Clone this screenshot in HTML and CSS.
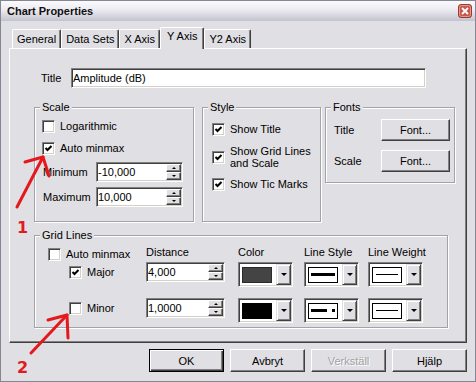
FILE: index.html
```html
<!DOCTYPE html>
<html lang="sv">
<head>
    <meta charset="UTF-8">
    <title>Chart Properties</title>
    <link rel="stylesheet" href="styles.css">
</head>
<body>
    <div class="window">
        <div class="titlebar">
            <span class="caption">Chart Properties</span>
            <span class="close">
                <svg width="14" height="14" viewBox="0 0 14 14">
                    <rect x="0.5" y="0.5" width="13" height="13" rx="2.5" fill="#c9584c" stroke="#9a3b33"/>
                    <rect x="1.5" y="1.5" width="11" height="11" rx="2" fill="none" stroke="#e79a8f"/>
                    <path d="M4 4 L10 10 M10 4 L4 10" stroke="#fff" stroke-width="1.8"/>
                </svg>
            </span>
        </div>

        <div class="client">
            <div class="tabs">
                <div class="tab">General</div>
                <div class="tab">Data Sets</div>
                <div class="tab">X Axis</div>
                <div class="tab active">Y Axis</div>
                <div class="tab">Y2 Axis</div>
            </div>

            <div class="panel">
                <div class="title-row">
                    <span class="title-label">Title</span>
                    <div class="textbox title-input">Amplitude (dB)</div>
                </div>

                <div class="groups">
                    <div class="group scale">
                        <span class="group-title">Scale</span>
                        <div class="scale-body">
                            <div class="check-row"><span class="check"></span>Logarithmic</div>
                            <div class="check-row second"><span class="check"><svg width="9" height="9" viewBox="0 0 9 9"><path d="M1.5 4 L3.5 6 L7.5 2" fill="none" stroke="#000" stroke-width="2"/></svg></span>Auto minmax</div>
                            <div class="field-row">
                                <span class="field-label">Minimum</span>
                                <div class="textbox spin scale-input">-10,000<span class="spinner"><span class="spin-btn up"></span><span class="spin-btn down"></span></span></div>
                            </div>
                            <div class="field-row">
                                <span class="field-label">Maximum</span>
                                <div class="textbox spin scale-input">10,000<span class="spinner"><span class="spin-btn up"></span><span class="spin-btn down"></span></span></div>
                            </div>
                        </div>
                    </div>

                    <div class="group style">
                        <span class="group-title">Style</span>
                        <div class="style-body">
                            <div class="check-row"><span class="check"><svg width="9" height="9" viewBox="0 0 9 9"><path d="M1.5 4 L3.5 6 L7.5 2" fill="none" stroke="#000" stroke-width="2"/></svg></span>Show Title</div>
                            <div class="check-row two-line"><span class="check"><svg width="9" height="9" viewBox="0 0 9 9"><path d="M1.5 4 L3.5 6 L7.5 2" fill="none" stroke="#000" stroke-width="2"/></svg></span><span>Show Grid Lines<br>and Scale</span></div>
                            <div class="check-row"><span class="check"><svg width="9" height="9" viewBox="0 0 9 9"><path d="M1.5 4 L3.5 6 L7.5 2" fill="none" stroke="#000" stroke-width="2"/></svg></span>Show Tic Marks</div>
                        </div>
                    </div>

                    <div class="group fonts">
                        <span class="group-title">Fonts</span>
                        <div class="fonts-body">
                            <div class="font-row"><span class="font-label">Title</span><button class="btn font-btn">Font...</button></div>
                            <div class="font-row"><span class="font-label">Scale</span><button class="btn font-btn">Font...</button></div>
                        </div>
                    </div>
                </div>

                <div class="group gridlines">
                    <span class="group-title">Grid Lines</span>
                    <div class="grid-body">
                        <div class="grid-row head">
                            <div class="check-row"><span class="check"></span>Auto minmax</div>
                            <span class="col-label">Distance</span>
                            <span class="col-label">Color</span>
                            <span class="col-label">Line Style</span>
                            <span class="col-label">Line Weight</span>
                        </div>
                        <div class="grid-row">
                            <div class="check-row sub"><span class="check"><svg width="9" height="9" viewBox="0 0 9 9"><path d="M1.5 4 L3.5 6 L7.5 2" fill="none" stroke="#000" stroke-width="2"/></svg></span>Major</div>
                            <div class="textbox spin dist-input">4,000<span class="spinner"><span class="spin-btn up"></span><span class="spin-btn down"></span></span></div>
                            <div class="combo"><span class="swatch color-dark"></span><span class="combo-btn"></span></div>
                            <div class="combo"><span class="swatch line-box"><span class="line thick"></span></span><span class="combo-btn"></span></div>
                            <div class="combo"><span class="swatch line-box"><span class="line thin"></span></span><span class="combo-btn"></span></div>
                        </div>
                        <div class="grid-row minor">
                            <div class="check-row sub"><span class="check"></span>Minor</div>
                            <div class="textbox spin dist-input">1,0000<span class="spinner"><span class="spin-btn up"></span><span class="spin-btn down"></span></span></div>
                            <div class="combo"><span class="swatch color-black"></span><span class="combo-btn"></span></div>
                            <div class="combo"><span class="swatch line-box"><span class="dash"></span><span class="dot"></span></span><span class="combo-btn"></span></div>
                            <div class="combo"><span class="swatch line-box"><span class="line thin"></span></span><span class="combo-btn"></span></div>
                        </div>
                    </div>
                </div>
            </div>

            <div class="buttons">
                <button class="btn dlg-btn default">OK</button>
                <button class="btn dlg-btn">Avbryt</button>
                <button class="btn dlg-btn disabled">Verkställ</button>
                <button class="btn dlg-btn">Hjälp</button>
            </div>
        </div>
    </div>

    <svg class="annotations" width="476" height="382" viewBox="0 0 476 382">
        <g stroke="#e3191d" stroke-width="3" stroke-linecap="round" stroke-linejoin="round" fill="none">
            <path d="M17 207 L43 157"/>
            <path d="M25 162 L43 157 L49 176"/>
            <path d="M31 353 L67 315"/>
            <path d="M48 320 L67 315 L68 338"/>
        </g>
        <text x="17" y="233" class="mark">1</text>
        <text x="17" y="373" class="mark">2</text>
    </svg>
</body>
</html>
```

FILE: styles.css
```css
body {
    margin: 0;
    position: relative;
    font-family: "Liberation Sans", Arial, sans-serif;
    font-size: 11px;
    color: #000;
    background: #e0dfe3;
}

.window {
    width: 476px;
    height: 382px;
    box-sizing: border-box;
    border: 1px solid #858594;
    background: #e0dfe3;
}

.titlebar {
    height: 20px;
    display: flex;
    align-items: center;
    justify-content: space-between;
    padding: 0 3px 0 6px;
    background: linear-gradient(#fbfbfd, #ebebf1 45%, #c3c3cf);
}

.caption {
    font-weight: bold;
    color: #111;
}

.close svg {
    display: block;
}

.client {
    padding: 0 8px;
}

/* tabs */
.tabs {
    display: flex;
    align-items: flex-end;
    height: 21px;
    margin-top: 6px;
    padding-left: 3px;
}

.tab {
    height: 19px;
    box-sizing: border-box;
    padding: 3px 4px 0;
    line-height: 13px;
    border-top: 1px solid #fff;
    border-left: 1px solid #fff;
    border-right: 1px solid #404040;
    box-shadow: inset -1px 0 0 #808080;
    border-radius: 2px 2px 0 0;
}

.tab.active {
    height: 22px;
    padding: 2px 6px 0;
    margin-bottom: -1px;
    position: relative;
    z-index: 1;
    background: #e0dfe3;
}

.panel {
    border: 1px solid;
    border-color: #fff #404040 #404040 #fff;
    box-shadow: inset -1px -1px 0 #808080;
    padding: 19px 0 14px 24px;
}

/* inputs */
.textbox {
    height: 20px;
    box-sizing: border-box;
    display: flex;
    align-items: center;
    padding: 1px 1px 1px 1px;
    background: #fff;
    border: 1px solid;
    border-color: #808080 #fff #fff #808080;
    box-shadow: inset 1px 1px 0 #404040, inset -1px -1px 0 #d4d0c8;
    line-height: 13px;
}

.title-row {
    display: flex;
    align-items: center;
    margin-left: 7px;
}

.title-label {
    width: 30px;
}

.title-input {
    width: 355px;
}

.spinner {
    margin-left: auto;
    align-self: stretch;
    width: 15px;
    display: flex;
    flex-direction: column;
}

.spin-btn {
    flex: 1;
    box-sizing: border-box;
    display: flex;
    align-items: center;
    justify-content: center;
    background: #e0dfe3;
    border: 1px solid;
    border-color: #fff #404040 #404040 #fff;
    box-shadow: inset -1px -1px 0 #808080;
}

.spin-btn.up::after {
    content: "";
    border-left: 2px solid transparent;
    border-right: 2px solid transparent;
    border-bottom: 2px solid #000;
}

.spin-btn.down::after {
    content: "";
    border-left: 2px solid transparent;
    border-right: 2px solid transparent;
    border-top: 2px solid #000;
}

/* group boxes */
.groups {
    display: flex;
    align-items: flex-start;
    margin-top: 19px;
}

.group {
    box-sizing: border-box;
    border: 1px solid #a3a2a7;
    box-shadow: 1px 1px 0 #fff, inset 1px 1px 0 #fff;
}

.group-title {
    display: block;
    width: fit-content;
    margin: -8px 0 0 5px;
    padding: 0 2px;
    line-height: 14px;
    background: #e0dfe3;
}

.scale {
    width: 160px;
    height: 115px;
    margin-right: 8px;
}

.style {
    width: 119px;
    height: 115px;
    margin-right: 4px;
}

.fonts {
    width: 130px;
    height: 76px;
}

.check-row {
    display: flex;
    align-items: center;
    gap: 5px;
    height: 15px;
    line-height: 13px;
    white-space: nowrap;
}

.check {
    width: 13px;
    height: 13px;
    flex: none;
    box-sizing: border-box;
    display: flex;
    align-items: center;
    justify-content: center;
    background: #fff;
    border: 1px solid;
    border-color: #808080 #fff #fff #808080;
    box-shadow: inset 1px 1px 0 #404040, inset -1px -1px 0 #d4d0c8;
}

.check svg {
    display: block;
}

.scale-body {
    display: flex;
    flex-direction: column;
    gap: 6px;
    padding: 5px 0 0 7px;
}

.scale-body .second {
    margin-top: 1px;
}

.field-row {
    display: flex;
    align-items: center;
}

.field-row + .field-row {
    margin-top: -1px;
}

.field-label {
    width: 53px;
    margin-left: 1px;
}

.scale-input {
    width: 87px;
}

.style-body {
    display: flex;
    flex-direction: column;
    gap: 9px;
    padding: 9px 0 0 9px;
}

.style-body .check-row {
    height: 13px;
}

.style-body .two-line {
    height: 24px;
    line-height: 12px;
}

.fonts-body {
    display: flex;
    flex-direction: column;
    gap: 9px;
    padding: 5px 0 0 8px;
}

.font-row {
    display: flex;
    align-items: center;
}

.font-label {
    width: 47px;
}

/* buttons */
.btn {
    box-sizing: border-box;
    display: flex;
    align-items: center;
    justify-content: center;
    padding: 0;
    font: inherit;
    color: #000;
    background: #e0dfe3;
    border: 1px solid;
    border-color: #fff #404040 #404040 #fff;
    box-shadow: inset -1px -1px 0 #808080;
}

.font-btn {
    width: 69px;
    height: 22px;
}

/* grid lines */
.gridlines {
    width: 414px;
    height: 93px;
    margin-top: 13px;
}

.grid-body {
    padding: 4px 0 0 13px;
}

.grid-row {
    display: grid;
    grid-template-columns: 98px 92px 66px 64px 55px;
    align-items: start;
}

.grid-row.head {
    height: 16px;
    align-items: center;
}

.grid-row.head .col-label {
    align-self: start;
    line-height: 13px;
    white-space: nowrap;
}

.grid-row.minor {
    margin-top: 11px;
}

.check-row.sub {
    height: 20px;
    margin-left: 21px;
}

.dist-input {
    width: 79px;
}

.combo {
    width: 55px;
    height: 25px;
    box-sizing: border-box;
    display: flex;
    align-items: center;
    padding: 1px 1px 1px 3px;
    background: #fff;
    border: 1px solid;
    border-color: #808080 #fff #fff #808080;
    box-shadow: inset 1px 1px 0 #404040, inset -1px -1px 0 #d4d0c8;
}

.swatch {
    width: 30px;
    height: 16px;
    box-sizing: border-box;
    flex: none;
}

.color-dark {
    background: #444;
    border: 1px solid #2a2a2a;
}

.color-black {
    background: #000;
}

.line-box {
    border: 1px solid #000;
    background: #fff;
    display: flex;
    align-items: center;
    padding: 0 2px;
}

.line {
    flex: 1;
    background: #000;
}

.line.thick {
    height: 3px;
}

.line.thin {
    height: 1px;
    margin: 0 1px;
}

.dash {
    width: 17px;
    height: 3px;
    background: #000;
}

.dot {
    width: 3px;
    height: 3px;
    margin-left: 5px;
    background: #000;
}

.combo-btn {
    margin-left: auto;
    align-self: stretch;
    width: 15px;
    box-sizing: border-box;
    display: flex;
    align-items: center;
    justify-content: center;
    background: #e0dfe3;
    border: 1px solid;
    border-color: #e0dfe3 #404040 #404040 #e0dfe3;
    box-shadow: inset 1px 1px 0 #fff, inset -1px -1px 0 #808080;
}

.combo-btn::after {
    content: "";
    border-left: 3px solid transparent;
    border-right: 3px solid transparent;
    border-top: 3px solid #000;
}

.buttons {
    display: flex;
    justify-content: flex-end;
    gap: 6px;
    margin-top: 6px;
}

.dlg-btn {
    width: 75px;
    height: 23px;
}

.dlg-btn.default {
    border-color: #000;
    box-shadow: inset 1px 1px 0 #fff, inset -1px -1px 0 #404040, inset -2px -2px 0 #808080;
}

.dlg-btn.disabled {
    color: #a3a2a6;
    text-shadow: 1px 1px 0 #fff;
}

/* red annotations drawn over the dialog */
.annotations {
    position: absolute;
    left: 0;
    top: 0;
    pointer-events: none;
}

.mark {
    font-family: "DejaVu Sans", sans-serif;
    font-weight: bold;
    font-size: 16px;
    fill: #e3191d;
}
```
